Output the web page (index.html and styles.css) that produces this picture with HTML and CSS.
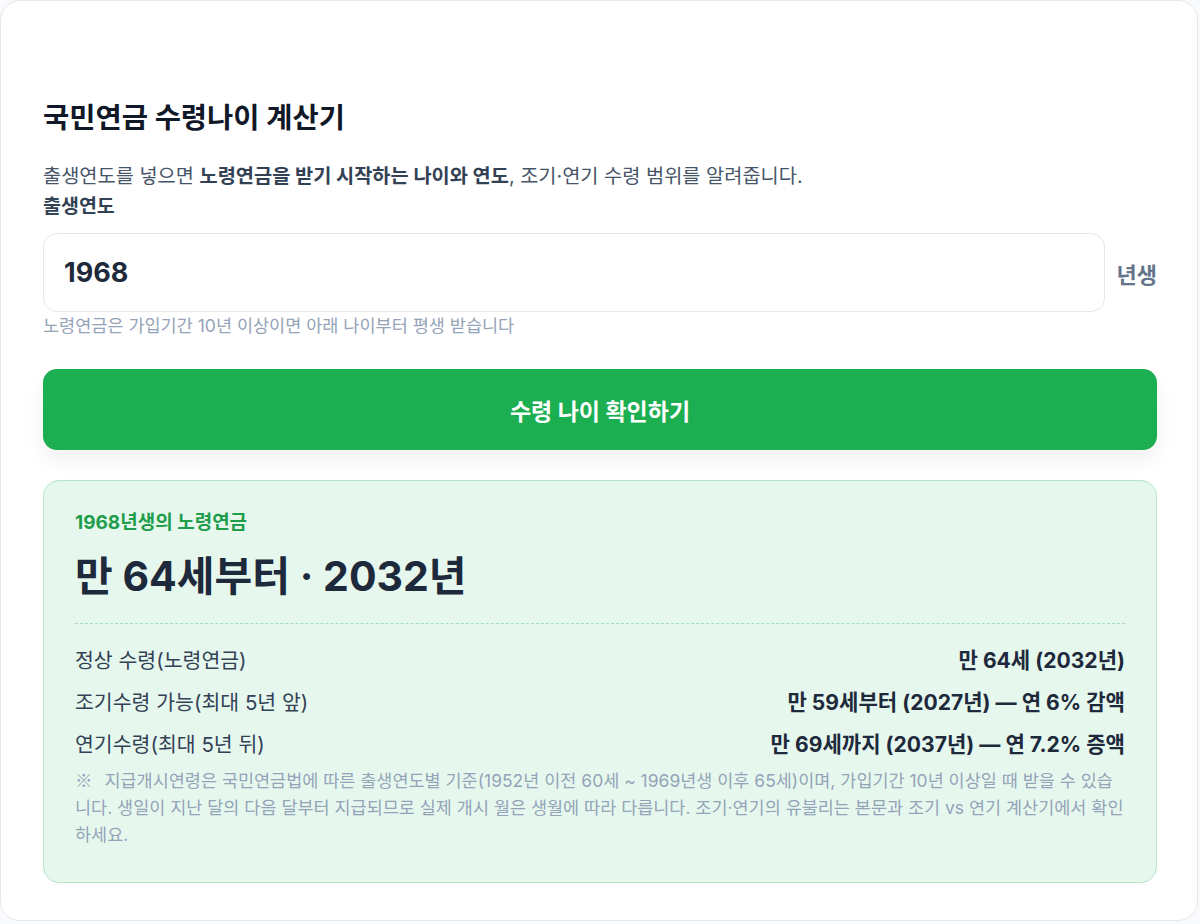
FILE: index.html
```html
<!DOCTYPE html>
<html lang="ko">
<head>
    <meta charset="UTF-8">
    <meta name="viewport" content="width=device-width, initial-scale=1.0">
    <title>국민연금 수령나이 계산기</title>
    <link rel="stylesheet" href="styles.css">
</head>
<body>
    <div class="card">
        <h1>국민연금 수령나이 계산기</h1>
        <p class="desc">출생연도를 넣으면 <strong>노령연금을 받기 시작하는 나이와 연도</strong>, 조기·연기 수령 범위를 알려줍니다.</p>

        <label class="field-label" for="birthYear">출생연도</label>
        <div class="input-row">
            <input type="text" id="birthYear" value="1968">
            <span class="unit">년생</span>
        </div>
        <p class="hint">노령연금은 가입기간 10년 이상이면 아래 나이부터 평생 받습니다</p>

        <button type="button" class="btn">수령 나이 확인하기</button>

        <div class="result">
            <div class="result-label">1968년생의 노령연금</div>
            <div class="result-main">만 64세부터 · 2032년</div>

            <div class="rows">
                <div class="row">
                    <span class="row-name">정상 수령(노령연금)</span>
                    <span class="row-value">만 64세 (2032년)</span>
                </div>
                <div class="row">
                    <span class="row-name">조기수령 가능(최대 5년 앞)</span>
                    <span class="row-value">만 59세부터 (2027년) — 연 6% 감액</span>
                </div>
                <div class="row">
                    <span class="row-name">연기수령(최대 5년 뒤)</span>
                    <span class="row-value">만 69세까지 (2037년) — 연 7.2% 증액</span>
                </div>
            </div>

            <p class="note"><span class="mark">※</span>지급개시연령은 국민연금법에 따른 출생연도별 기준(1952년 이전 60세 ~ 1969년생 이후 65세)이며, 가입기간 10년 이상일 때 받을 수 있습니다. 생일이 지난 달의 다음 달부터 지급되므로 실제 개시 월은 생월에 따라 다릅니다. 조기·연기의 유불리는 본문과 조기 vs 연기 계산기에서 확인하세요.</p>
        </div>
    </div>
</body>
</html>
```

FILE: styles.css
```css
* { box-sizing: border-box; }
body {
    margin: 0;
    background: #f8fafc;
    font-family: Inter, "Noto Sans CJK KR", sans-serif;
    color: #1e293b;
}
.card {
    width: 1198px;
    height: 921px;
    background: #fff;
    border: 1px solid #e5e7eb;
    border-radius: 20px;
    padding: 99px 40px 0 42px;
}
h1 {
    margin: 0;
    font-size: 28.5px;
    line-height: 36px;
    font-weight: 700;
    color: #111827;
}
.desc {
    margin: 25px 0 0;
    font-size: 19.75px;
    line-height: 30px;
    color: #475569;
}
.desc strong { color: #334155; font-weight: 700; }
.field-label {
    display: block;
    font-size: 19.5px;
    line-height: 30px;
    font-weight: 700;
    color: #334155;
}
.input-row {
    display: flex;
    align-items: center;
    gap: 12px;
    margin-top: 12px;
}
.input-row input {
    flex: 1;
    min-width: 0;
    height: 79px;
    border: 1px solid #e2e8f0;
    border-radius: 14px;
    padding: 0 20px;
    font-family: inherit;
    font-size: 27px;
    font-weight: 700;
    color: #1e293b;
    outline: none;
}
.unit {
    font-size: 22px;
    font-weight: 700;
    color: #64748b;
}
.hint {
    margin: 2px 0 0;
    font-size: 17.5px;
    line-height: 24px;
    color: #94a3b8;
}
.btn {
    display: block;
    width: 1114px;
    height: 81px;
    margin-top: 31px;
    border: none;
    border-radius: 14px;
    background: #1caf51;
    color: #fff;
    font-family: inherit;
    font-size: 23px;
    font-weight: 700;
    box-shadow: 0 10px 22px rgba(15, 23, 42, 0.06);
    cursor: pointer;
}
.result {
    width: 1114px;
    margin-top: 30px;
    background: #e6f8ee;
    border: 1px solid #b6e5c8;
    border-radius: 16px;
    padding: 29px 31px 34px;
}
.result-label {
    font-size: 19px;
    line-height: 26px;
    font-weight: 700;
    color: #1f9d4b;
}
.result-main {
    margin-top: 15px;
    font-size: 41px;
    line-height: 50px;
    font-weight: 700;
    color: #1e293b;
    padding-bottom: 22px;
    border-bottom: 1px dashed #a8dcc0;
}
.rows { margin-top: 16px; }
.row {
    display: flex;
    justify-content: space-between;
    font-size: 20.5px;
    line-height: 30px;
    padding: 6px 0;
}
.row-name { color: #334155; }
.row-value { font-weight: 700; color: #1e293b; font-size: 21.1px; }
.note {
    margin: 0;
    font-size: 17.48px;
    line-height: 27px;
    color: #94a3b8;
}
.mark {
    display: inline-block;
    margin-right: 12px;
    font-family: "Noto Sans CJK KR", sans-serif;
}
```
